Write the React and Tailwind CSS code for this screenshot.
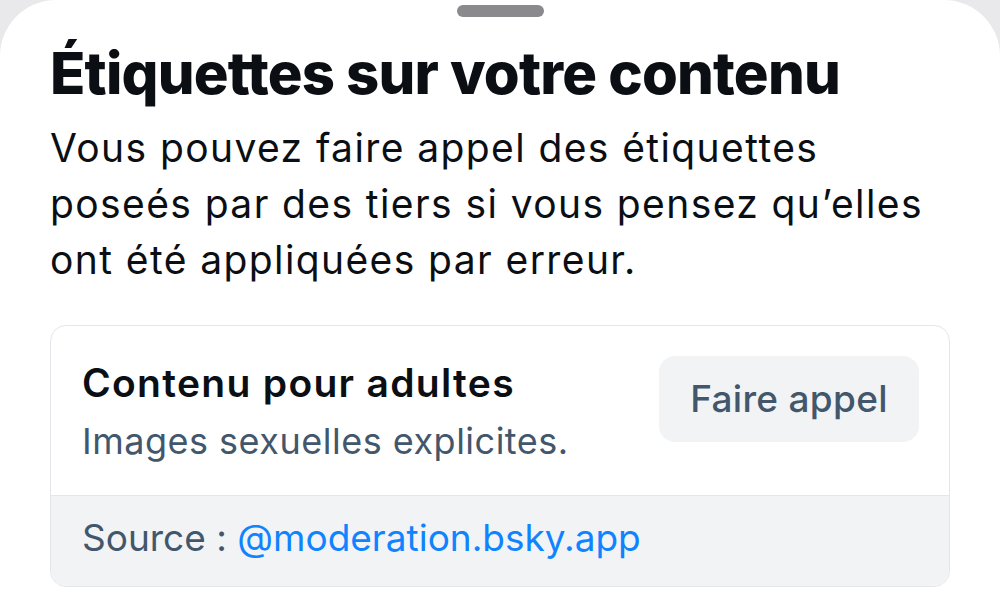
import React from 'react';

const font = { fontFamily: 'Inter, "Noto Sans", sans-serif' };

const App = () => {
  return (
    <div className="w-[1000px] h-[609px] bg-[#e9e9eb] overflow-hidden" style={font}>
      <div className="h-full bg-white rounded-t-[56px] px-[50px] pt-[5px]">
        {/* handle */}
        <div className="flex justify-center">
          <div className="w-[87px] h-[12px] rounded-full bg-[#8a8a8e]" />
        </div>

        <h1 className="mt-[24px] text-[58px] leading-[64px] font-extrabold tracking-[-0.8px] text-[#0b0f14]">
          Étiquettes sur votre contenu
        </h1>
        <p className="mt-[15px] text-[39px] leading-[56px] tracking-[1.4px] text-[#0b0f14]">
          Vous pouvez faire appel des étiquettes
          <br />
          poseés par des tiers si vous pensez qu’elles
          <br />
          ont été appliquées par erreur.
        </p>

        {/* label card */}
        <div className="mt-[37px] border border-[#e3e6ea] rounded-[16px] overflow-hidden">
          <div className="flex items-start justify-between pl-[31px] pr-[30px] pt-[30px] pb-[32px]">
            <div className="pt-[3px]">
              <div className="text-[39px] leading-[48px] font-semibold tracking-[1.3px] text-[#0b0f14]">
                Contenu pour adultes
              </div>
              <div className="mt-[12px] text-[36px] leading-[44px] tracking-[0.5px] text-[#42576c]">
                Images sexuelles explicites.
              </div>
            </div>
            <button className="w-[260px] h-[86px] rounded-[16px] bg-[#f1f3f5] text-[37px] font-medium tracking-[0.3px] text-[#42576c]">
              Faire appel
            </button>
          </div>
          <div className="h-[91px] border-t border-[#e3e6ea] bg-[#f1f3f5] px-[31px] pt-[20px] text-[37px] leading-[44px] text-[#42576c]">
            <span>Source :&nbsp;</span>
            <span className="text-[#1083fe]">@moderation.bsky.app</span>
          </div>
        </div>
      </div>
    </div>
  );
};

export default App;
